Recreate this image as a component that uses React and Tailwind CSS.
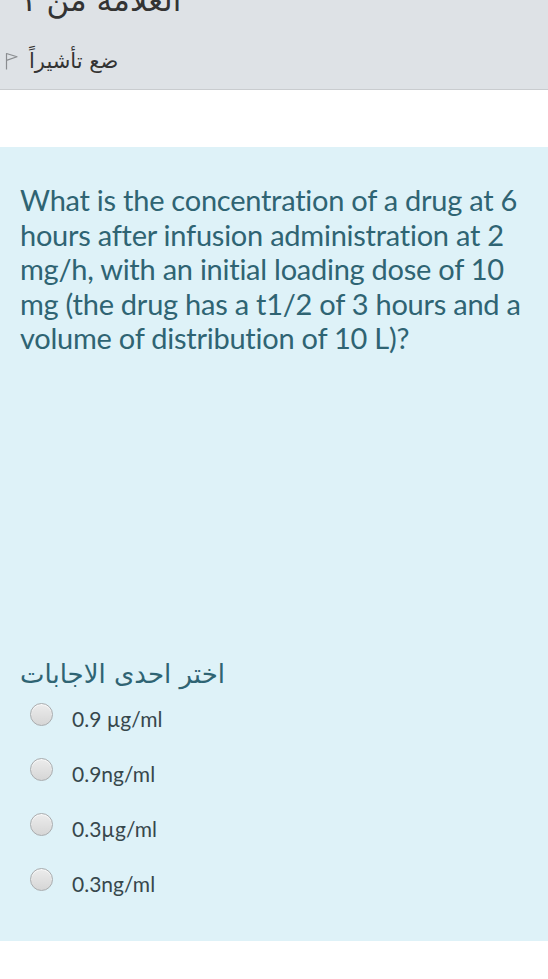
import React from "react";

const options = ["0.9 µg/ml", "0.9ng/ml", "0.3µg/ml", "0.3ng/ml"];

const Flag = () => (
  <svg width="13" height="18" viewBox="0 0 13 18" fill="none" stroke="#8a8d90" strokeWidth="1.2">
    <path d="M1.5 17.5 V1.5 L12 4.8 L1.5 8.4" strokeLinejoin="round" />
  </svg>
);

const Radio = () => (
  <span className="block w-[23px] h-[23px] rounded-full border border-[#a9acae] bg-gradient-to-b from-[#ececec] to-[#d6d6d6] shadow-[inset_0_1px_1px_rgba(255,255,255,0.8)]" />
);

const App = () => {
  return (
    <div className="w-[548px] h-[979px] bg-white overflow-hidden">
      <div className="h-[90px] bg-[#dee2e6] border-b border-[#c9cccf] pl-[20px] overflow-hidden">
        <div
          className="-mt-[17px] h-[34px] text-[31px] leading-[34px] text-[#333]"
          style={{ fontFamily: "'DejaVu Sans', sans-serif" }}
        >
          <span className="inline-block" dir="rtl">العلامة من ١</span>
        </div>
        <div className="flex items-center gap-[11px] -ml-[15px] mt-[31px]">
          <Flag />
          <span
            className="text-[21px] leading-[26px] text-[#333]"
            style={{ fontFamily: "'DejaVu Sans', sans-serif" }}
            dir="rtl"
          >
            ضع تأشيراً
          </span>
        </div>
      </div>
      <div className="h-[57px]" />
      <div className="h-[794px] bg-[#def2f8] pl-[20px] pr-[10px] pt-[36px]">
        <p
          className="text-[29px] leading-[34.5px] text-[#2f6473] tracking-[-0.25px] whitespace-nowrap"
          style={{ fontFamily: "Lato, 'Noto Sans', sans-serif" }}
        >
          What is the concentration of a drug at 6<br />
          hours after infusion administration at 2<br />
          mg/h, with an initial loading dose of 10<br />
          mg (the drug has a t1/2 of 3 hours and a<br />
          volume of distribution of 10 L)?
        </p>
        <div
          className="mt-[298px] h-[40px] text-[26px] leading-[40px] text-[#2f6473]"
          style={{ fontFamily: "'DejaVu Sans', sans-serif" }}
        >
          <span className="inline-block" dir="rtl">اختر احدى الاجابات</span>
        </div>
        <div className="mt-[9px] pl-[10px]">
          {options.map((o) => (
            <div key={o} className="flex items-start h-[55px]">
              <Radio />
              <span
                className="ml-[19px] mt-[3px] text-[21px] leading-[26px] text-[#37474c]"
                style={{ fontFamily: "Lato, 'Noto Sans', sans-serif" }}
              >
                {o}
              </span>
            </div>
          ))}
        </div>
      </div>
    </div>
  );
};

export default App;
